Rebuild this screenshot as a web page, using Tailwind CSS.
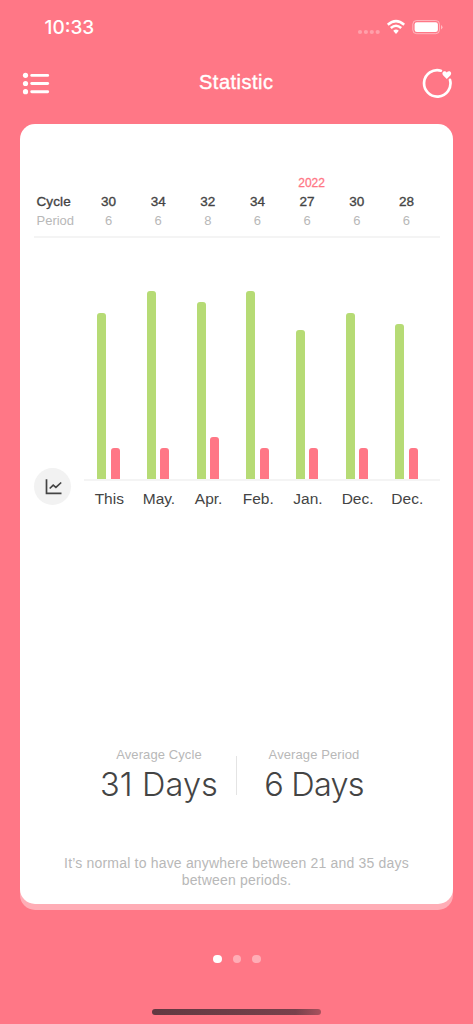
<!DOCTYPE html>
<html lang="en">
<head>
<meta charset="utf-8">
<title>Statistic</title>
<script src="https://cdn.jsdelivr.net/npm/@tailwindcss/browser@4"></script>
</head>
<body class="flex h-[1024px] w-[473px] flex-col overflow-hidden bg-[#ff7786] font-['Liberation_Sans',Arial,sans-serif] text-[#444]">
  <!-- Status bar -->
  <div class="flex h-[54px] shrink-0 items-center justify-between pr-[30px] pl-[44.500px] text-white">
    <div class="pt-px text-[19px] leading-6 font-medium font-['Inter',sans-serif]">10:33</div>
    <svg class="h-[20px] w-[88px]" viewBox="0 0 88 20" fill="none">
      <g fill="#fff" fill-opacity=".3"><circle cx="5" cy="15" r="2.1"/><circle cx="10.900" cy="15" r="2.1"/><circle cx="16.800" cy="15" r="2.1"/><circle cx="22.700" cy="15" r="2.100"/></g>
      <g transform="translate(1 .3)"><path d="M31.800 7.400Q40 .300 48.200 7.400M34.800 10.700Q40 6.100 45.200 10.700" stroke="#fff" stroke-width="2.500"/>
      <path d="M37.200 13.400Q40 11.100 42.800 13.400L40 16.600Z" fill="#fff"/></g>
      <rect x="57.800" y="3.500" width="26.700" height="13.200" rx="3.800" stroke="#fff" stroke-opacity=".45"/>
      <rect x="59.600" y="5.200" width="23.300" height="9.800" rx="2.300" fill="#fff"/>
      <path d="M86 8v4.400q1.500-.7 1.500-2.200T86 8Z" fill="#fff" fill-opacity=".5"/>
    </svg>
  </div>
  <!-- Navigation -->
  <div class="flex h-[70px] shrink-0 items-start justify-between pr-[20px] pl-[22px] text-white">
    <svg class="mt-[17px] h-[26px] w-[28px]" viewBox="0 0 28 26" fill="#fff">
      <circle cx="3.500" cy="4.300" r="2.600"/><circle cx="3.500" cy="12.500" r="2.600"/><circle cx="3.500" cy="20.700" r="2.600"/>
      <rect x="8.300" y="2.900" width="18.800" height="2.900" rx="1.400"/><rect x="8.300" y="11.100" width="18.800" height="2.900" rx="1.400"/><rect x="8.300" y="19.300" width="18.800" height="2.900" rx="1.400"/>
    </svg>
    <div class="mt-[16px] text-[20px] leading-6"><svg class="h-6 w-[80px] overflow-visible" viewBox="0 0 80 24"><text x="3" y="19" textLength="74" fill="#fff" stroke="#fff" stroke-width=".4">Statistic</text></svg></div>
    <svg class="mt-[13px] h-[32px] w-[32px]" viewBox="0 0 32 32" fill="none">
      <path d="M19.900 3.700A13.200 13.200 0 1 0 29 12.900" stroke="#fff" stroke-width="2.700" stroke-linecap="round"/>
      <path d="M25.800 12L22.300 8.400C20.700 6.700 21.500 4.200 23.500 4.200Q25.100 4.200 25.800 5.500Q26.500 4.200 28.100 4.200C30.100 4.200 30.900 6.700 29.300 8.400Z" fill="#fff"/>
    </svg>
  </div>
  <!-- Card -->
  <main class="mx-[20.300px] flex h-[779.500px] shrink-0 flex-col rounded-[15px] bg-white shadow-[0_6px_0_#ffadb6]">
    <section class="mt-[51px] mr-[13px] ml-[13.700px] grid h-[62.500px] shrink-0 grid-cols-[49.700px_repeat(7,49.670px)] grid-rows-[17px_20px_18px] content-start border-b-2 border-[#f4f4f4] text-center text-[13px]">
      <div class="col-start-6 row-start-1 pl-[9px] text-[12px] leading-[16px] text-[#ff7786] [-webkit-text-stroke:.3px_#ff7786]">2022</div>
      <div class="col-start-1 row-start-2 pl-[2.500px] text-left text-[13.500px] leading-[20px] tracking-[.1px] [-webkit-text-stroke:.35px_#444]">Cycle</div>
      <div class="row-start-2 text-[13.500px] leading-[20px] [-webkit-text-stroke:.35px_#444]">30</div>
      <div class="row-start-2 text-[13.500px] leading-[20px] [-webkit-text-stroke:.35px_#444]">34</div>
      <div class="row-start-2 text-[13.500px] leading-[20px] [-webkit-text-stroke:.35px_#444]">32</div>
      <div class="row-start-2 text-[13.500px] leading-[20px] [-webkit-text-stroke:.35px_#444]">34</div>
      <div class="row-start-2 text-[13.500px] leading-[20px] [-webkit-text-stroke:.35px_#444]">27</div>
      <div class="row-start-2 text-[13.500px] leading-[20px] [-webkit-text-stroke:.35px_#444]">30</div>
      <div class="row-start-2 text-[13.500px] leading-[20px] [-webkit-text-stroke:.35px_#444]">28</div>
      <div class="col-start-1 row-start-3 pl-[2.500px] text-left leading-[18px] text-[#b8b8b8]">Period</div>
      <div class="row-start-3 leading-[18px] text-[#b8b8b8]">6</div>
      <div class="row-start-3 leading-[18px] text-[#b8b8b8]">6</div>
      <div class="row-start-3 leading-[18px] text-[#b8b8b8]">8</div>
      <div class="row-start-3 leading-[18px] text-[#b8b8b8]">6</div>
      <div class="row-start-3 leading-[18px] text-[#b8b8b8]">6</div>
      <div class="row-start-3 leading-[18px] text-[#b8b8b8]">6</div>
      <div class="row-start-3 leading-[18px] text-[#b8b8b8]">6</div>
    </section>
    <section class="mr-[13px] ml-[14.200px] flex h-[273.500px] shrink-0">
      <div class="w-[49.500px] shrink-0 pt-[230.500px]">
        <div class="flex size-[37px] items-center justify-center rounded-full bg-[#f2f2f2]">
          <svg class="size-[18px] overflow-visible" viewBox="0 0 18 18" fill="none" stroke="#444" stroke-width="1.700"><path d="M2.500 1.200V15.300H17.500"/><path d="M5.700 10.500L9.200 7.200L11.900 9.400L17.200 4.500"/></svg>
        </div>
      </div>
      <div class="flex-1">
        <div class="grid h-[243.500px] grid-cols-[repeat(7,49.670px)] items-end border-b-2 border-[#f4f4f4]">
          <div class="flex items-end justify-center gap-[4.500px] pr-[.5px]"><i class="w-[9px] rounded-t-[3px] bg-[#b6db75]" style="height:166px"></i><i class="w-[9px] rounded-t-[3px] bg-[#ff7786]" style="height:31.5px"></i></div>
          <div class="flex items-end justify-center gap-[4.500px] pr-[.5px]"><i class="w-[9px] rounded-t-[3px] bg-[#b6db75]" style="height:188.300px"></i><i class="w-[9px] rounded-t-[3px] bg-[#ff7786]" style="height:31.5px"></i></div>
          <div class="flex items-end justify-center gap-[4.500px] pr-[.5px]"><i class="w-[9px] rounded-t-[3px] bg-[#b6db75]" style="height:177px"></i><i class="w-[9px] rounded-t-[3px] bg-[#ff7786]" style="height:42.5px"></i></div>
          <div class="flex items-end justify-center gap-[4.500px] pr-[.5px]"><i class="w-[9px] rounded-t-[3px] bg-[#b6db75]" style="height:188.300px"></i><i class="w-[9px] rounded-t-[3px] bg-[#ff7786]" style="height:31.5px"></i></div>
          <div class="flex items-end justify-center gap-[4.500px] pr-[.5px]"><i class="w-[9px] rounded-t-[3px] bg-[#b6db75]" style="height:149.300px"></i><i class="w-[9px] rounded-t-[3px] bg-[#ff7786]" style="height:31.5px"></i></div>
          <div class="flex items-end justify-center gap-[4.500px] pr-[.5px]"><i class="w-[9px] rounded-t-[3px] bg-[#b6db75]" style="height:166px"></i><i class="w-[9px] rounded-t-[3px] bg-[#ff7786]" style="height:31.5px"></i></div>
          <div class="flex items-end justify-center gap-[4.500px] pr-[.5px]"><i class="w-[9px] rounded-t-[3px] bg-[#b6db75]" style="height:155px"></i><i class="w-[9px] rounded-t-[3px] bg-[#ff7786]" style="height:31.5px"></i></div>
        </div>
        <div class="mt-[8px] grid grid-cols-[repeat(7,49.670px)] pl-[.5px] text-center text-[15.500px] leading-5 text-[#444]">
          <span>This</span><span>May.</span><span>Apr.</span><span>Feb.</span><span>Jan.</span><span>Dec.</span><span>Dec.</span>
        </div>
      </div>
    </section>
    <section class="mt-[235px] flex justify-center text-center">
      <div class="w-[154px]">
        <div class="text-[13px] leading-[18px] tracking-[.1px] text-[#b8b8b8]">Average Cycle</div>
        <div class="mt-px font-['Inter',sans-serif] text-[32.500px] leading-[40px] font-light tracking-[.1px] whitespace-nowrap">31 Days</div>
      </div>
      <div class="mt-[10px] h-[39px] w-px bg-[#e4e4e4]"></div>
      <div class="w-[154px]">
        <div class="text-[13px] leading-[18px] tracking-[.1px] text-[#b8b8b8]">Average Period</div>
        <div class="mt-px font-['Inter',sans-serif] text-[32.500px] leading-[40px] font-light tracking-[-.8px] whitespace-nowrap">6 Days</div>
      </div>
    </section>
    <p class="mt-[49.500px] text-center text-[14px] leading-[17px] tracking-[.19px] text-[#b8b8b8]">It’s normal to have anywhere between 21 and 35 days<br>between periods.</p>
  </main>
  <!-- Page indicator -->
  <div class="mt-[51px] flex h-[9px] shrink-0 justify-center gap-[10.700px] pl-px">
    <span class="size-[8.800px] rounded-full bg-white"></span><span class="size-[8.800px] rounded-full bg-[#ffadb6]"></span><span class="size-[8.800px] rounded-full bg-[#ffadb6]"></span>
  </div>
  <div class="mx-auto mt-[45.500px] h-[6px] w-[169px] shrink-0 rounded-full bg-linear-to-r from-[#623841] via-[#78404b] via-85% to-[#a9515d]"></div>
</body>
</html>
